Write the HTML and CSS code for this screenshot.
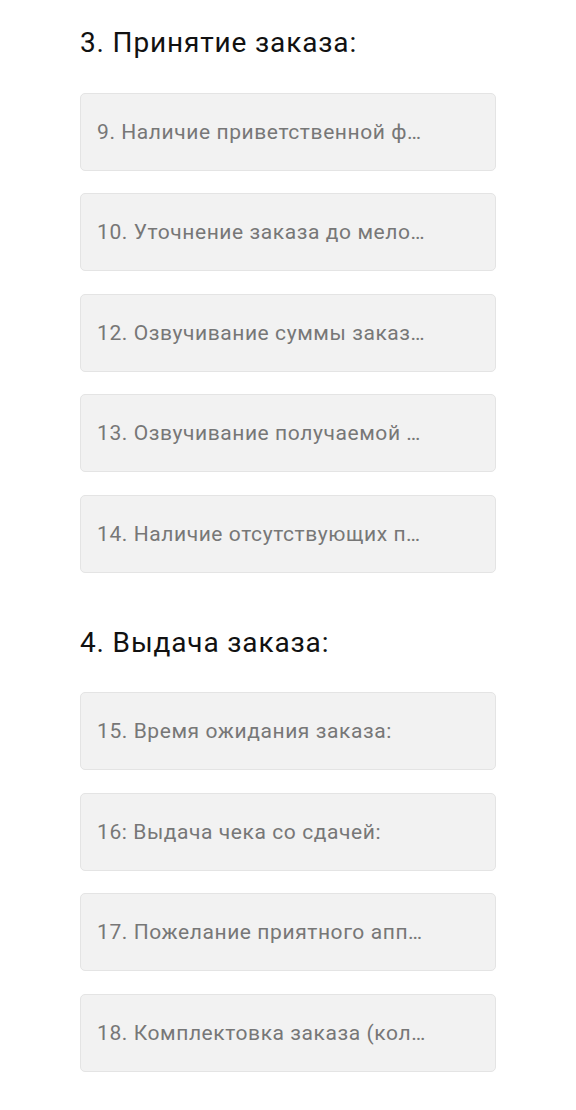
FILE: index.html
```html
<!DOCTYPE html>
<html lang="ru">
<head>
<meta charset="utf-8">
<link rel="stylesheet" href="styles.css">
</head>
<body>
<main class="page">
  <section class="section">
    <h2 class="section-title">3. Принятие заказа:</h2>
    <div class="list">
      <div class="item"><span class="item-text">9. Наличие приветственной ф…</span></div>
      <div class="item"><span class="item-text">10. Уточнение заказа до мело…</span></div>
      <div class="item"><span class="item-text">12. Озвучивание суммы заказ…</span></div>
      <div class="item"><span class="item-text">13. Озвучивание получаемой …</span></div>
      <div class="item"><span class="item-text">14. Наличие отсутствующих п…</span></div>
    </div>
  </section>
  <section class="section">
    <h2 class="section-title">4. Выдача заказа:</h2>
    <div class="list">
      <div class="item"><span class="item-text">15. Время ожидания заказа:</span></div>
      <div class="item"><span class="item-text">16: Выдача чека со сдачей:</span></div>
      <div class="item"><span class="item-text">17. Пожелание приятного апп…</span></div>
      <div class="item"><span class="item-text">18. Комплектовка заказа (кол…</span></div>
    </div>
  </section>
</main>
</body>
</html>
```
FILE: styles.css
```css
html, body {
  margin: 0;
  padding: 0;
  background: #ffffff;
}
body {
  font-family: Roboto, "Noto Sans", "Liberation Sans", sans-serif;
}
.page {
  width: 416px;
  padding: 23px 0 0 80px;
}
.section {
  margin-bottom: 50px;
}
.section-title {
  margin: 0 0 29.5px 0;
  font-size: 28px;
  line-height: 40px;
  font-weight: 400;
  letter-spacing: 0.85px;
  color: #111111;
}
.list {
  display: flex;
  flex-direction: column;
  gap: 22.5px;
}
.item {
  box-sizing: border-box;
  height: 78px;
  display: flex;
  align-items: center;
  padding: 0 16px;
  background: #f2f2f2;
  border: 1px solid #e4e4e4;
  border-radius: 5px;
}
.item-text {
  font-size: 21px;
  letter-spacing: 0.58px;
  color: #777777;
  white-space: nowrap;
}
```
